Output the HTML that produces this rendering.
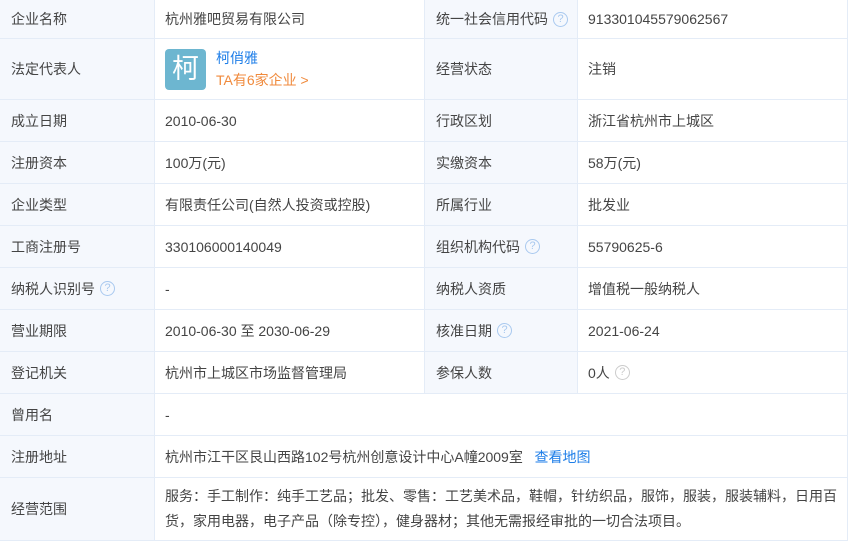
<!DOCTYPE html><html><head><meta charset="utf-8"><style>
body{margin:0;background:#fff;width:852px;height:539px;overflow:hidden;font-family:"Liberation Sans","Noto Sans CJK SC",sans-serif;font-size:14px;color:#444}
table{border-collapse:collapse;table-layout:fixed;width:848px;position:absolute;left:-1px;top:-1px}
td{border:1px solid #e4ecf7;padding:0 0 0 10px;vertical-align:middle;white-space:nowrap;line-height:20px}
td.l{background:#f5f8fd;padding-left:11px}
.q{display:inline-block;box-sizing:border-box;width:15px;height:15px;border:1px solid #a9c9ef;border-radius:50%;color:#a9c9ef;font-size:11px;line-height:13px;text-align:center;margin-left:5px;vertical-align:middle;position:relative;top:-1px}
.q.g{border-color:#ccc;color:#ccc}
a{color:#1e7ee8;text-decoration:none}
</style></head><body>
<table>
<col style="width:155px"><col style="width:270px"><col style="width:153px"><col style="width:270px">
<tr style="height:39px"><td class="l">企业名称</td><td>杭州雅吧贸易有限公司</td><td class="l">统一社会信用代码<span class="q">?</span></td><td>913301045579062567</td></tr>
<tr style="height:61px"><td class="l">法定代表人</td><td><div style="display:flex;align-items:center"><div style="width:41px;height:41px;background:#6db6d0;border-radius:4px;color:#fff;font-size:27px;line-height:41px;text-align:center">柯</div><div style="margin-left:10px;line-height:22px"><div style="color:#1e7ee8">柯俏雅</div><div style="color:#f08a3c">TA有6家企业 &gt;</div></div></div></td><td class="l">经营状态</td><td>注销</td></tr>
<tr style="height:42px"><td class="l">成立日期</td><td>2010-06-30</td><td class="l">行政区划</td><td>浙江省杭州市上城区</td></tr>
<tr style="height:42px"><td class="l">注册资本</td><td>100万(元)</td><td class="l">实缴资本</td><td>58万(元)</td></tr>
<tr style="height:42px"><td class="l">企业类型</td><td>有限责任公司(自然人投资或控股)</td><td class="l">所属行业</td><td>批发业</td></tr>
<tr style="height:42px"><td class="l">工商注册号</td><td>330106000140049</td><td class="l">组织机构代码<span class="q">?</span></td><td>55790625-6</td></tr>
<tr style="height:42px"><td class="l">纳税人识别号<span class="q">?</span></td><td>-</td><td class="l">纳税人资质</td><td>增值税一般纳税人</td></tr>
<tr style="height:42px"><td class="l">营业期限</td><td>2010-06-30 至 2030-06-29</td><td class="l">核准日期<span class="q">?</span></td><td>2021-06-24</td></tr>
<tr style="height:42px"><td class="l">登记机关</td><td>杭州市上城区市场监督管理局</td><td class="l">参保人数</td><td>0人<span class="q g">?</span></td></tr>
<tr style="height:42px"><td class="l">曾用名</td><td colspan="3">-</td></tr>
<tr style="height:42px"><td class="l">注册地址</td><td colspan="3">杭州市江干区艮山西路102号杭州创意设计中心A幢2009室 &nbsp; <a>查看地图</a></td></tr>
<tr style="height:63px"><td class="l">经营范围</td><td colspan="3" style="white-space:normal;line-height:25px;padding-right:8px">服务：手工制作：纯手工艺品；批发、零售：工艺美术品，鞋帽，针纺织品，服饰，服装，服装辅料，日用百货，家用电器，电子产品（除专控），健身器材；其他无需报经审批的一切合法项目。</td></tr>
</table>
</body></html>
